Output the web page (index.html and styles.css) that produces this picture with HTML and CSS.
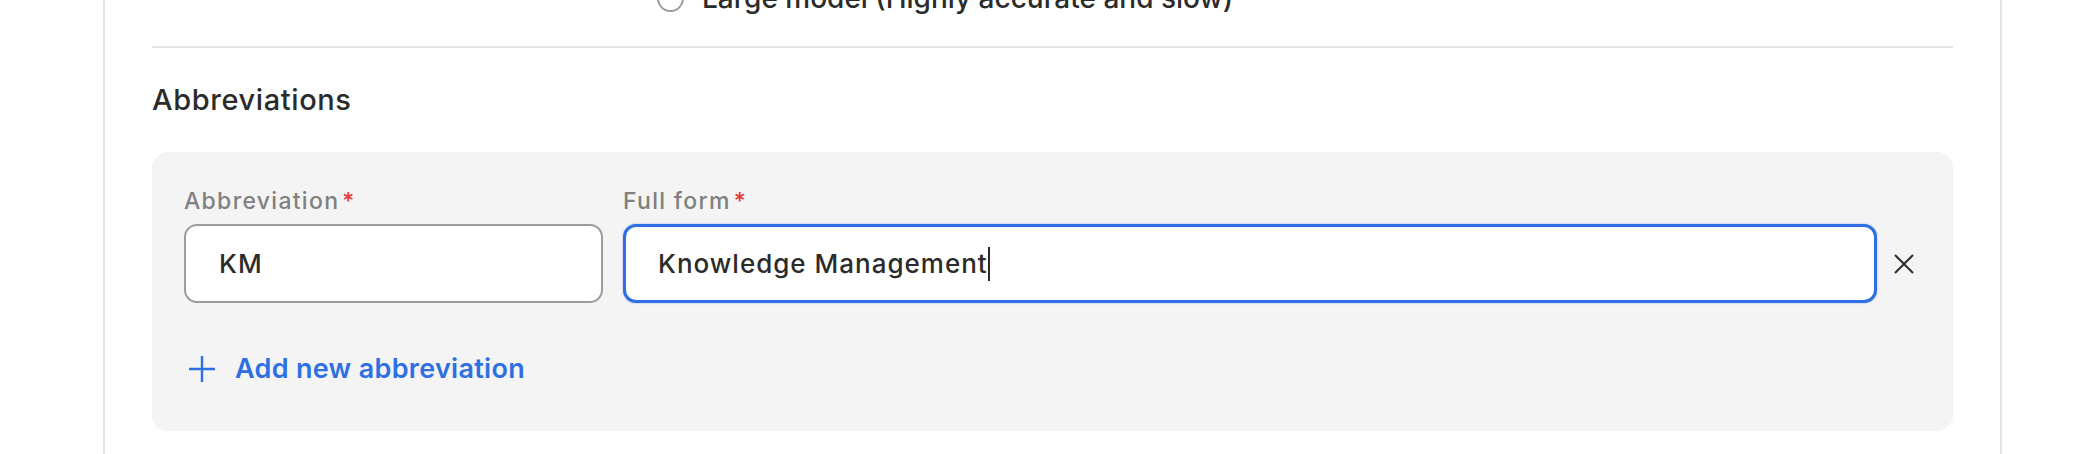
FILE: index.html
```html
<!DOCTYPE html>
<html lang="en">
<head>
<meta charset="utf-8">
<title>Abbreviations</title>
<link rel="stylesheet" href="styles.css">
</head>
<body>
<div class="card">
  <div class="radio-row">
    <span class="radio"></span>
    <span class="radio-label">Large model (Highly accurate and slow)</span>
  </div>
  <hr class="divider">
  <h2 class="section-title">Abbreviations</h2>
  <div class="abbr-box">
    <div class="abbr-row">
      <div class="field field-short">
        <label class="field-label">Abbreviation<span class="req">*</span></label>
        <div class="text-input">KM</div>
      </div>
      <div class="field field-long">
        <label class="field-label">Full form<span class="req">*</span></label>
        <div class="text-input focused">Knowledge Management<span class="caret"></span></div>
      </div>
      <button class="remove-btn" aria-label="Remove">
        <svg width="20" height="20" viewBox="0 0 20 20"><path d="M1 1 L19 19 M19 1 L1 19" stroke="#2b2b2b" stroke-width="2" fill="none"/></svg>
      </button>
    </div>
    <button class="add-btn">
      <svg width="26" height="26" viewBox="0 0 26 26"><path d="M13 0 V26 M0 13 H26" stroke="#2f6fe4" stroke-width="2.4" fill="none"/></svg>
      <span>Add new abbreviation</span>
    </button>
  </div>
</div>
</body>
</html>
```
FILE: styles.css
```css
html, body {
  margin: 0;
  padding: 0;
  background: #ffffff;
  height: 100%;
  overflow: hidden;
}
body {
  font-family: "Inter", "Open Sans", sans-serif;
  color: #2b2b2b;
}
.card {
  display: flow-root;
  margin-left: 103px;
  min-height: 100%;
  border-left: 2px solid #e4e4e4;
  border-right: 2px solid #e4e4e4;
  padding: 0 47px;
  box-sizing: content-box;
  width: 1801px;
}
.radio-row {
  display: flex;
  align-items: center;
  gap: 18px;
  margin-left: 505px;
  margin-top: -22px;
  height: 40px;
}
.radio {
  width: 27px;
  height: 27px;
  border: 2px solid #9a9a9a;
  border-radius: 50%;
  box-sizing: border-box;
  background: #fff;
}
.radio-label {
  font-size: 28px;
  font-weight: 500;
  color: #2b2b2b;
}
.divider {
  border: 0;
  border-top: 2px solid #e6e6e6;
  margin: 28px 0 0 0;
}
.section-title {
  margin: 35px 0 0 0;
  font-size: 29px;
  font-weight: 500;
  letter-spacing: 0.6px;
  line-height: 34px;
  color: #2b2b2b;
}
.abbr-box {
  margin-top: 35px;
  background: #f4f4f4;
  border-radius: 16px;
  padding: 35px 32px 46px 32px;
}
.abbr-row {
  display: flex;
  align-items: flex-end;
  gap: 20px;
}
.field {
  display: flex;
  flex-direction: column;
  gap: 9px;
}
.field-short { width: 419px; }
.field-long { width: 1254px; }
.field-label {
  font-size: 23px;
  font-weight: 500;
  letter-spacing: 1.3px;
  line-height: 28px;
  color: #808080;
}
.req {
  color: #e53935;
  margin-left: 3px;
}
.text-input {
  height: 79px;
  box-sizing: border-box;
  border: 2px solid #9c9c9c;
  border-radius: 13px;
  background: #fff;
  padding: 0 33px;
  display: flex;
  align-items: center;
  font-size: 26px;
  font-weight: 500;
  letter-spacing: 1px;
  color: #2b2b2b;
}
.text-input.focused {
  border: 3px solid #2f6fe4;
  padding: 0 32px;
  box-shadow: 0 0 2px rgba(47, 111, 228, 0.5);
}
.caret {
  display: inline-block;
  width: 2px;
  height: 34px;
  background: #2b2b2b;
  margin-left: 0;
}
.remove-btn {
  border: 0;
  background: transparent;
  padding: 0;
  margin-left: -3px;
  height: 79px;
  display: flex;
  align-items: center;
  cursor: pointer;
}
.add-btn {
  margin-top: 49px;
  display: flex;
  align-items: center;
  gap: 20px;
  border: 0;
  background: transparent;
  padding: 0 0 0 5px;
  font-family: inherit;
  font-size: 27px;
  font-weight: 600;
  letter-spacing: 0.3px;
  color: #2f6fe4;
  cursor: pointer;
}
```
